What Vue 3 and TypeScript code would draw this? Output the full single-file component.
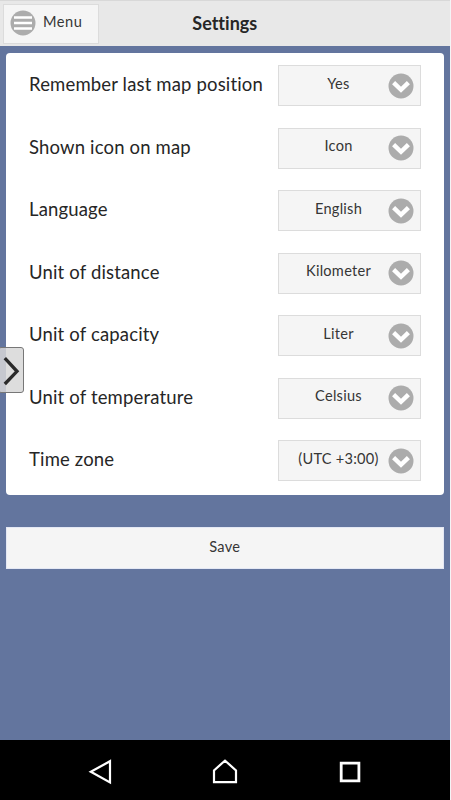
<script setup lang="ts">
import { ref } from 'vue'

interface Setting {
  label: string
  value: string
}

const settings = ref<Setting[]>([
  { label: 'Remember last map position', value: 'Yes' },
  { label: 'Shown icon on map', value: 'Icon' },
  { label: 'Language', value: 'English' },
  { label: 'Unit of distance', value: 'Kilometer' },
  { label: 'Unit of capacity', value: 'Liter' },
  { label: 'Unit of temperature', value: 'Celsius' },
  { label: 'Time zone', value: '(UTC +3:00)' },
])
</script>

<template>
  <div class="screen">
    <header class="header">
      <button class="menu" type="button">
        <svg class="menu-icon" viewBox="0 0 26 26">
          <circle cx="13" cy="13" r="12.5" />
          <path d="M4 7.6h18M4 13h18M4 18.4h18" />
        </svg>
        <span>Menu</span>
      </button>
      <h1 class="title">Settings</h1>
    </header>
    <main class="content">
      <section class="card">
        <div v-for="s in settings" :key="s.label" class="row">
          <span class="label">{{ s.label }}</span>
          <button class="select" type="button">
            <span class="value">{{ s.value }}</span>
            <svg class="chevron" viewBox="0 0 26 26">
              <circle cx="13" cy="13" r="12.5" />
              <path d="M5.6 9.6 13 16.8 20.4 9.6" />
            </svg>
          </button>
        </div>
      </section>
      <button class="save" type="button">Save</button>
      <div class="drawer">
        <svg viewBox="0 0 24 48">
          <path d="M4.8 11.2 17 24.3 4.8 37" />
        </svg>
      </div>
    </main>
    <nav class="navbar">
      <svg viewBox="0 0 28 28"><path d="M24 3.2v21.2L4.8 13.8z" /></svg>
      <svg viewBox="0 0 28 28"><path d="M3 24.2V12.4L14 2.6l11 9.8v11.8z" /></svg>
      <svg viewBox="0 0 28 28"><path class="square" d="M5.2 5.2h17.7v17.7H5.2z" /></svg>
    </nav>
  </div>
</template>

<style>
body {
  background: #f4f4f6;
}
</style>

<style scoped>
.screen {
  display: flex;
  flex-direction: column;
  width: 449.5px;
  height: 800px;
  overflow: hidden;
  background: #63759e;
  color: #262626;
  font-family: Lato, "Noto Sans", sans-serif;
  font-variant-ligatures: none;
}
button {
  margin: 0;
  padding: 0;
  border: 1px solid #dcdcdc;
  background: #f5f5f5;
  color: #363636;
  font: 14.6px/20px Lato, "Noto Sans", sans-serif;
  letter-spacing: 0.25px;
  box-sizing: border-box;
}
.header {
  display: grid;
  grid-template-columns: 96px 1fr 96px;
  box-sizing: border-box;
  height: 46px;
  flex: none;
  padding: 3px 3px 0;
  border-top: 1px solid #d8d8d8;
  background: #e8e8e8;
}
.menu {
  display: flex;
  align-items: center;
  height: 40px;
  padding: 0 0 2px 6px;
  gap: 7px;
}
.menu span {
  margin-top: -2px;
  letter-spacing: 0.5px;
}
.menu-icon {
  width: 26px;
  height: 26px;
}
.menu-icon circle,
.chevron circle {
  fill: #acacac;
}
.menu-icon path {
  fill: none;
  stroke: #fff;
  stroke-width: 2.5;
}
.title {
  margin: 6px 0 0;
  text-align: center;
  font-size: 18px;
  line-height: 26px;
  font-weight: 700;
}
.content {
  position: relative;
  flex: 1;
  padding: 6.5px 6px 0;
}
.card {
  box-sizing: border-box;
  height: 442.5px;
  padding: 12.5px 22.5px 0 23px;
  border-radius: 4px;
  background: #fff;
}
.row {
  display: flex;
  justify-content: space-between;
  height: 62.5px;
}
.label {
  padding-top: 6px;
  font-size: 18.5px;
  line-height: 26px;
  letter-spacing: 0.16px;
  white-space: nowrap;
}
.select {
  display: flex;
  align-items: center;
  width: 143px;
  height: 41px;
  padding-right: 6px;
  flex: none;
}
.value {
  flex: 1;
  margin: -4px -10px 0 0;
  text-align: center;
  white-space: nowrap;
}
.chevron {
  width: 26px;
  height: 26px;
  flex: none;
}
.chevron path {
  fill: none;
  stroke: #fff;
  stroke-width: 4.4;
}
.save {
  display: block;
  width: 437.5px;
  height: 42px;
  margin-top: 32px;
  padding-bottom: 3px;
  border-color: #e4e8f4;
}
.drawer {
  position: absolute;
  left: -2px;
  top: 301px;
  width: 26px;
  height: 46px;
  box-sizing: border-box;
  border: 1px solid #777;
  border-radius: 3px;
  background: rgba(215, 215, 215, 0.85);
}
.drawer svg {
  display: block;
  width: 24px;
  height: 48px;
  margin: -1px 0 0 1px;
}
.drawer path {
  fill: none;
  stroke: #2a2a2a;
  stroke-width: 3.3;
}
.navbar {
  display: flex;
  justify-content: space-between;
  align-items: center;
  box-sizing: border-box;
  flex: none;
  height: 60px;
  padding: 3px 86px 0;
  background: #000;
}
.navbar svg {
  width: 28px;
  height: 28px;
}
.navbar path {
  fill: none;
  stroke: #fff;
  stroke-width: 2.2;
}
.navbar .square {
  stroke-width: 2.8;
}
</style>
